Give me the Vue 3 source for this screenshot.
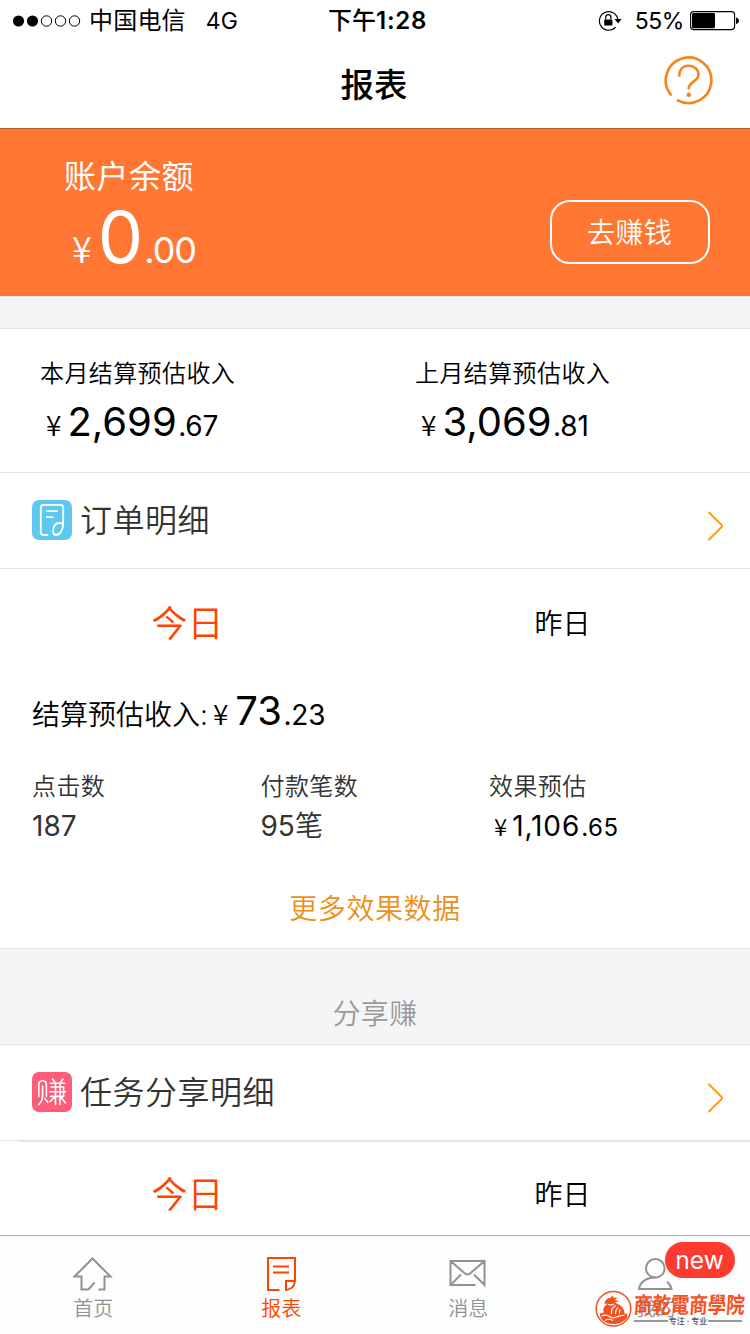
<script setup>
const months = [
  { label: '本月结算预估收入', whole: '2,699', cents: '.67' },
  { label: '上月结算预估收入', whole: '3,069', cents: '.81' }
]
</script>

<template>
  <div class="screen">
    <header class="status">
      <div class="status-left">
        <svg class="signal" width="70" height="14" viewBox="0 0 70 14">
          <circle cx="6.5" cy="7" r="5.6" />
          <circle cx="20.5" cy="7" r="5.6" />
          <g fill="none" stroke="#000" stroke-width="1">
            <circle cx="34.5" cy="7" r="5.2" />
            <circle cx="48.5" cy="7" r="5.2" />
            <circle cx="62.5" cy="7" r="5.2" />
          </g>
        </svg>
        <span class="carrier">中国电信</span>
        <span class="network">4G</span>
      </div>
      <div class="clock"><span class="clock-ap">下午</span>1:28</div>
      <div class="status-right">
        <svg width="24" height="22" viewBox="0 0 24 22">
          <path d="M17.6 17.2A9.3 9.3 0 1 1 19.8 9" fill="none" stroke="#000" stroke-width="1.2" />
          <path d="M16.6 9h7l-3.5 4.4z" />
          <rect x="6.2" y="9.4" width="8.2" height="6.2" rx=".6" />
          <path d="M7.7 9.6V7.3a2.6 2.6 0 0 1 5.2 0v2.3" fill="none" stroke="#000" stroke-width="1.2" />
        </svg>
        <span class="percent">55%</span>
        <svg width="50" height="20" viewBox="0 0 50 20">
          <rect x=".6" y=".6" width="44" height="18" rx="3" fill="none" stroke="#000" stroke-width="1.1" />
          <rect x="2" y="2" width="23" height="15.2" rx="1.4" />
          <path d="M46 6.4q3 .8 3 3.3t-3 3.3z" />
        </svg>
      </div>
    </header>

    <nav class="nav">
      <h1>报表</h1>
      <svg class="help" width="50" height="50" viewBox="0 0 50 50" fill="none" stroke="#fa8319" stroke-width="2.6" stroke-linecap="round">
        <path d="M7.8 39.6A22.8 22.8 0 1 1 14.8 45.4" />
        <path d="M16.3 20.6c0-6.2 3.8-9.9 9.3-9.9 5.7 0 9.9 3.7 9.9 8.9 0 7.5-9.7 6.6-9.7 13.7" />
        <circle cx="25.8" cy="39.8" r="2.3" fill="#fa8319" stroke="none" />
      </svg>
    </nav>

    <section class="balance">
      <div>
        <div class="balance-label">账户余额</div>
        <div class="balance-amount"><span class="yen">¥</span><span class="whole">0</span><span class="cents">.00</span></div>
      </div>
      <button class="earn">去赚钱</button>
    </section>
    <div class="gap"></div>

    <section class="months">
      <div v-for="m in months" :key="m.label" class="month">
        <div class="month-label">{{ m.label }}</div>
        <div class="amount"><span class="yen">¥</span><span class="whole">{{ m.whole }}</span><span class="cents">{{ m.cents }}</span></div>
      </div>
    </section>

    <section class="row">
      <svg width="40" height="40" viewBox="0 0 40 40">
        <rect width="40" height="40" rx="7" fill="#5fc8f1" />
        <g fill="none" stroke="#fff" stroke-width="1.8" stroke-linecap="round" stroke-linejoin="round">
          <path d="M15.5 35H11.5q-2.7 0-2.700-2.700V7.500q0-2.700 2.700-2.700h17q2.700 0 2.700 2.700V24c-.2 5.500-2.700 11-7.500 11-3.600 0-2.800-6-1.500-8.800 1.600-3.300 5-3.600 7.600-2.700" />
          <path d="M14 11.200h12M14 17.200h7.500" stroke-linecap="butt" />
        </g>
      </svg>
      <span class="row-title">订单明细</span>
      <svg class="chevron" width="18" height="32" viewBox="0 0 18 32"><path d="M2 2.500 14.400 14.700q1.400 1.300 0 2.600L2 29.500" /></svg>
    </section>

    <section class="tabs">
      <div class="tab active">今日</div>
      <div class="tab">昨日</div>
    </section>

    <section class="detail">
      <div class="amount settle"><span class="settle-label">结算预估收入:</span><span class="yen">¥</span><span class="whole">73</span><span class="cents">.23</span></div>
      <div class="stats">
        <div class="stat">
          <div class="stat-label">点击数</div>
          <div class="stat-value"><span class="num">187</span></div>
        </div>
        <div class="stat">
          <div class="stat-label">付款笔数</div>
          <div class="stat-value"><span class="num">95</span>笔</div>
        </div>
        <div class="stat">
          <div class="stat-label">效果预估</div>
          <div class="stat-value money"><span class="yen">¥</span><span class="whole">1,106</span><span class="cents">.65</span></div>
        </div>
      </div>
      <a class="more">更多效果数据</a>
    </section>

    <div class="share">分享赚</div>

    <section class="row task">
      <svg width="40" height="40" viewBox="0 0 40 40">
        <rect width="40" height="40" rx="7" fill="#fe5c79" />
        <g fill="none" stroke="#fff" stroke-width="1.6" stroke-linecap="round" stroke-linejoin="round">
          <path d="M6.800 24.500V13q0-4.300 3.800-4.300t3.800 4.300v11.500M10.600 14v9q0 6-3.800 9.500M12.800 26.500l3 3.800" />
          <path d="M20.500 7l2.600 3.500M31 7l-2.600 3.500M18.200 11.200h14.600M19 15h12.600v9.400H18.500M17.500 19.700h16M23.500 11.500v21M28 11.500v21M22.800 25l-4.800 4.500M28.800 25l4.700 6" />
        </g>
      </svg>
      <span class="row-title">任务分享明细</span>
      <svg class="chevron" width="18" height="32" viewBox="0 0 18 32"><path d="M2 2.500 14.400 14.700q1.400 1.300 0 2.600L2 29.500" /></svg>
    </section>
    <div class="inset-line"></div>

    <section class="tabs lower">
      <div class="tab active">今日</div>
      <div class="tab">昨日</div>
    </section>

    <footer class="tabbar">
      <div class="item">
        <svg width="40" height="36" viewBox="0 0 40 36">
          <path d="M15.500 33.500l6.200-7.200M25.500 33.500H31.500V20.500h6L19.500 2.500 1.500 20.500h7v13h7" />
        </svg>
        <span>首页</span>
      </div>
      <div class="item on">
        <svg width="40" height="36" viewBox="0 0 40 36">
          <path d="M18.500 34H7V2h27V25q-.8 8-9 9V25h9M12 10.500h16M12 16.500h16" />
        </svg>
        <span>报表</span>
      </div>
      <div class="item">
        <svg width="40" height="36" viewBox="0 0 40 36">
          <path d="M27.500 29H2.500V5h34v24L26 18.500M2.500 5 17 17.500q2.500 2 5 0L36.500 5M2.500 29 13 18.500" />
        </svg>
        <span>消息</span>
      </div>
      <div class="item">
        <svg width="40" height="36" viewBox="0 0 40 36">
          <circle cx="19.300" cy="12.300" r="9.300" />
          <path d="M19.500 21.500C10.500 21.500 4 26 3 33H35.500q-.7-4.500-4.500-7.300" />
        </svg>
        <span>我的</span>
        <em class="badge">new</em>
      </div>
    </footer>

    <div class="watermark">
      <svg width="37" height="38" viewBox="0 0 37 38">
        <circle cx="18.500" cy="18.800" r="17.300" fill="none" stroke="#f4511e" stroke-width="1.500" />
        <g fill="#f4511e">
          <path d="M10 11.500q2-4 5-3.500l3-2.500.5 2.500 4-.5-2.500 2.500 4 1-4 1.500 6 3.500q4 4 3.500 8l2-.5q2 3-1 6-5 4.500-12 4.500-8 0-12-5-2-3-1.500-5.500l4-1q-1.500-3 0-5.500l3.500-3.500-3 .5z" />
        </g>
        <g fill="none" stroke="#fff" stroke-width="1.100">
          <path d="M13 14.500q3 1 6-.5M16.500 24q-1-6 4.500-8.500M20.500 24q0-5 3-6.500M24.500 23.500q-.5-3 1-4" />
          <path d="M6.500 26q5-2 8 .5t7 .5 8-1.500M10 30.500q4-2.500 8 0" />
        </g>
      </svg>
      <div class="wm-text">
        <div class="wm-name">商乾電商學院</div>
        <div class="wm-sub"><i></i><span>专注 · 专业</span><i></i></div>
      </div>
    </div>
  </div>
</template>

<style>
body {
  margin: 0;
  background: #fff;
}
</style>

<style scoped>
.screen {
  position: relative;
  width: 750px;
  height: 1334px;
  overflow: hidden;
  background: #fff;
  color: #000;
  font-family: Inter, "Noto Sans CJK SC", sans-serif;
  font-weight: 350;
  display: flex;
  flex-direction: column;
  white-space: nowrap;
}
.screen > * {
  flex-shrink: 0;
  box-sizing: border-box;
}
svg {
  display: block;
  flex-shrink: 0;
}
.status {
  height: 40px;
  display: grid;
  grid-template-columns: 1fr auto 1fr;
  align-items: center;
  line-height: 42px;
  font-size: 24px;
  font-weight: 400;
  padding: 0 10px 0 12px;
}
.status-left,
.status-right {
  display: flex;
  align-items: center;
}
.status-right {
  justify-content: flex-end;
}
.status-right svg {
  margin-top: -1px;
}
.carrier {
  margin-left: 7px;
  letter-spacing: .2px;
}
.network {
  margin-left: 20px;
  font-size: 23px;
}
.clock {
  font-weight: 600;
  font-size: 24px;
  letter-spacing: .7px;
  padding-left: 3px;
}
.clock-ap {
  font-weight: 500;
  letter-spacing: 0;
}
.percent {
  margin: 0 6px 0 13px;
  font-size: 23px;
  letter-spacing: -.4px;
}
.nav {
  height: 89px;
  border-bottom: 1px solid #b55a2c;
  display: flex;
  justify-content: center;
  position: relative;
}
h1 {
  margin: 0;
  font-size: 33.500px;
  line-height: 91px;
  font-weight: 500;
  padding-right: 2px;
}
.help {
  position: absolute;
  left: 662.500px;
  top: 14.800px;
}
.yen {
  font-family: "Noto Sans CJK SC", sans-serif;
  line-height: 0;
}
.cents {
  line-height: 0;
}
.whole,
.cents,
.num {
  font-weight: 400;
}
.balance {
  height: 167px;
  background: #ff7733;
  color: #fff;
  display: flex;
  justify-content: space-between;
  padding: 28px 40px 0 64px;
}
.balance-label {
  font-size: 32px;
  line-height: 40px;
  letter-spacing: .5px;
  font-weight: 400;
}
.balance-amount {
  margin-top: 10px;
  padding-left: 8px;
  font-size: 72px;
  line-height: 60px;
}
.balance-amount .yen,
.balance-amount .cents {
  font-size: 36px;
}
.balance-amount .cents {
  letter-spacing: -1px;
}
.balance-amount .whole {
  margin: 0 1px 0 6px;
}
.earn {
  margin: 43px 0 0;
  width: 160px;
  height: 64px;
  box-sizing: border-box;
  border: 2px solid #fff;
  border-radius: 20px;
  background: none;
  color: inherit;
  font: inherit;
  font-size: 28px;
  line-height: 60px;
  letter-spacing: .4px;
  padding: 1px 1px 0 0;
}
.gap {
  height: 33px;
  background: #f4f4f4;
  border-top: 1px solid #e2e2e2;
  border-bottom: 1px solid #e2e2e2;
}
.months {
  height: 144px;
  border-bottom: 1px solid #e3e3e3;
  display: grid;
  grid-template-columns: 1fr 1fr;
  padding-top: 30px;
}
.month {
  padding-left: 40px;
}
.month-label {
  font-size: 24px;
  line-height: 30px;
  letter-spacing: .4px;
}
.amount {
  font-size: 40px;
  line-height: 40px;
}
.month .amount {
  margin-top: 13px;
  padding-left: 6px;
}
.amount .yen,
.amount .cents {
  font-size: 28px;
}
.amount .cents {
  letter-spacing: -.2px;
}
.amount .whole {
  margin: 0 1.500px 0 6px;
}
.row {
  height: 96px;
  border-bottom: 1px solid #e3e3e3;
  display: flex;
  align-items: center;
  padding: 0 25px 1px 32px;
  color: #333;
}
.row > svg:first-child {
  margin-top: -1px;
}
.row-title {
  flex: 1;
  margin: 2px 0 0 8px;
  font-size: 32px;
  line-height: 48px;
  letter-spacing: .5px;
}
.chevron {
  margin-top: 11px;
}
.chevron path {
  fill: none;
  stroke: #ff9c0a;
  stroke-width: 2;
  stroke-linecap: round;
}
.tabs {
  display: grid;
  grid-template-columns: 1fr 1fr;
  height: 108px;
}
.tab {
  text-align: center;
  font-size: 28px;
  line-height: 110px;
}
.tab.active {
  font-size: 36px;
  color: #ff4400;
}
.detail {
  height: 272px;
  border-bottom: 1px solid #e3e3e3;
  padding: 14px 32px 0;
  box-sizing: border-box;
}
.settle-label {
  font-size: 28px;
  line-height: 0;
}
.settle .yen {
  margin-left: 5px;
}
.settle .whole {
  margin-left: 7px;
}
.stats {
  display: grid;
  grid-template-columns: repeat(3, 228.500px);
  margin-top: 41px;
  color: #333;
}
.stat-label {
  font-size: 24px;
  line-height: 30px;
  letter-spacing: .4px;
}
.stat-value {
  font-size: 28px;
  line-height: 36px;
  margin-top: 6px;
}
.money {
  color: #000;
  padding-left: 5px;
}
.money .yen,
.money .cents {
  font-size: 24px;
}
.money .cents {
  letter-spacing: .6px;
}
.money .whole {
  margin: 0 1px 0 5px;
  letter-spacing: .9px;
}
.more {
  display: block;
  margin-top: 45px;
  text-align: center;
  font-size: 28px;
  line-height: 40px;
  letter-spacing: .6px;
  color: #ec8f19;
}
.share {
  height: 96px;
  background: #f5f5f7;
  border-bottom: 1px solid #e3e3e3;
  padding-top: 33px;
  text-align: center;
  font-size: 28px;
  line-height: 64px;
  letter-spacing: .4px;
  color: #999;
}
.inset-line {
  height: 1px;
  margin-left: 20px;
  background: #e3e3e3;
}
.tabs.lower {
  height: 93px;
}
.lower .tab {
  line-height: 107px;
}
.tabbar {
  height: 99px;
  background: #fdfdfd;
  border-top: 1px solid #ababab;
  display: grid;
  grid-template-columns: repeat(4, 1fr);
}
.item {
  position: relative;
  display: flex;
  flex-direction: column;
  align-items: center;
  padding: 20px 1px 0 0;
  color: #929292;
  font-size: 20px;
  line-height: 34px;
}
.item svg {
  fill: none;
  stroke: currentColor;
  stroke-width: 2;
}
.item.on {
  padding-right: 0;
  color: #ff4400;
}
.badge {
  position: absolute;
  left: 102px;
  top: 6px;
  width: 70px;
  height: 36px;
  border-radius: 18px;
  background: #ff3b30;
  color: #fff;
  font-style: normal;
  font-weight: 400;
  font-size: 24.500px;
  line-height: 37px;
  text-align: center;
}
.watermark {
  position: absolute;
  left: 594.500px;
  top: 1289.500px;
  display: flex;
}
.wm-text {
  margin-left: 2px;
}
.wm-name {
  font-family: "Noto Sans CJK TC", sans-serif;
  font-weight: 700;
  font-size: 18.500px;
  line-height: 26px;
  color: #f4511e;
  transform: skewX(-4deg) scaleY(1.2);
}
.wm-sub {
  display: flex;
  align-items: center;
  justify-content: space-between;
  width: 109px;
  margin-top: 1px;
  font-size: 8px;
  line-height: 9px;
  font-weight: 500;
  color: #555;
}
.wm-sub i {
  width: 34px;
  height: 1.500px;
  background: #999;
}
</style>
